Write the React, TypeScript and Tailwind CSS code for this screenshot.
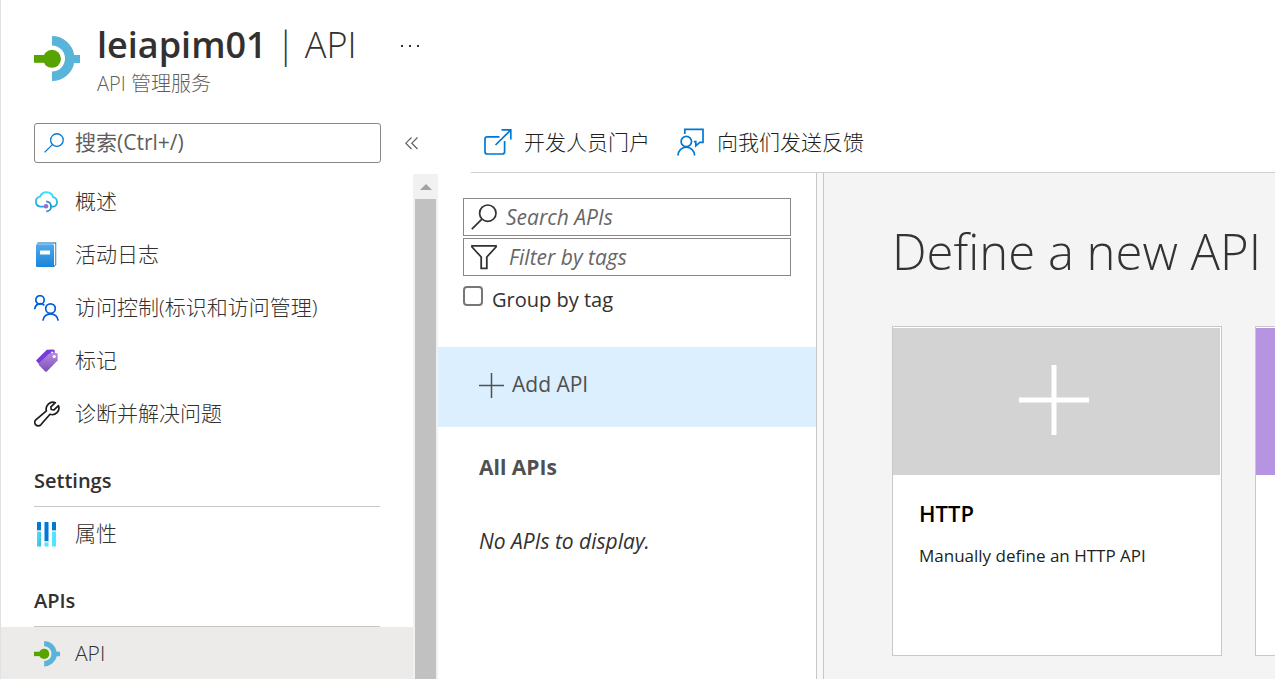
import { useState } from 'react'
import type { ReactNode } from 'react'

interface NavItem {
  label: string
  icon: ReactNode
  active?: boolean
}

interface NavSection {
  title?: string
  items: NavItem[]
}

function ApiIcon({ className }: { className: string }) {
  return (
    <svg className={className} viewBox="0 0 46 46" aria-hidden="true">
      <path
        d="M18 0a22.5 22.5 0 0 1 22.2 19H46v8h-5.8A22.5 22.5 0 0 1 18 45v-9.500a13 13 0 0 0 0-26z"
        fill="#59b4d9"
      />
      <circle cx="18" cy="22.800" r="9" fill="#57a300" />
      <path d="M0 19h14v7.800H0z" fill="#57a300" />
    </svg>
  )
}

function SearchIcon({ className }: { className: string }) {
  return (
    <svg className={className} viewBox="0 0 26 26" fill="none" stroke="currentColor" aria-hidden="true">
      <circle cx="16.800" cy="9.200" r="8.200" strokeWidth={1.7} />
      <path d="M10.900 15.100L0.800 25.200" strokeWidth={1.7} />
    </svg>
  )
}

function CloudIcon() {
  return (
    <svg className="h-[26px] w-[26px]" viewBox="0 0 26 26" fill="none" aria-hidden="true">
      <defs>
        <linearGradient id="cloud" x1="0" y1="0" x2="0" y2="1">
          <stop offset="0" stopColor="#3fe0fa" />
          <stop offset="1" stopColor="#1fa5dc" />
        </linearGradient>
      </defs>
      <path
        d="M9.500 17.600H6.500a5 5 0 0 1-.5-9.900A7 7 0 0 1 19.200 8.200a4.900 4.900 0 0 1 .2 9.500h-1"
        stroke="url(#cloud)"
        strokeWidth={1.8}
        strokeLinecap="round"
      />
      <path d="M12.200 12.500a4.900 4.900 0 0 1 0 9.800" stroke="#2593c8" strokeWidth={1.8} />
      <circle cx="12" cy="17.300" r="2.300" fill="#9a6ad6" />
    </svg>
  )
}

function BookIcon() {
  return (
    <svg className="h-[26px] w-[26px]" viewBox="0 0 26 26" aria-hidden="true">
      <defs>
        <linearGradient id="book" x1="0" y1="0" x2="0" y2="1">
          <stop offset="0" stopColor="#53a9ee" />
          <stop offset="1" stopColor="#1985d8" />
        </linearGradient>
      </defs>
      <path d="M3.500 .6h18.700v22L20 25H3.500z" fill="#0c6299" />
      <path d="M4 1.600h17.400v21L19.800 24V3.600H3z" fill="#fff" />
      <rect x="2" y="2.200" width="17.800" height="22.800" rx="1" fill="url(#book)" />
      <rect x="6" y="8.500" width="10" height="4" rx="0.500" fill="#fff" />
    </svg>
  )
}

function PeopleIcon() {
  return (
    <svg
      className="h-[26px] w-[26px]"
      viewBox="0 0 26 26"
      fill="none"
      stroke="#015cda"
      strokeWidth={1.7}
      aria-hidden="true"
    >
      <circle cx="6" cy="4.900" r="4.200" />
      <path d="M.8 14.300a5.600 5.600 0 0 1 9.500-4" />
      <circle cx="16.500" cy="13.600" r="4.800" />
      <path d="M8.900 25.600a7.700 7.700 0 0 1 15.300 0" />
    </svg>
  )
}

function TagIcon() {
  return (
    <svg className="h-[26px] w-[26px]" viewBox="0 0 26 26" aria-hidden="true">
      <defs>
        <linearGradient id="tag" x1="0" y1="0" x2="0" y2="1">
          <stop offset="0" stopColor="#b78ae0" />
          <stop offset="1" stopColor="#7a4fb8" />
        </linearGradient>
      </defs>
      <path d="M2 12.500L12.800 1.800l6.700-.4 1.200 1v6L8.400 16.800l-3-.2z" fill="#773adc" />
      <circle cx="18.200" cy="4.600" r="1.200" fill="#fff" />
      <path d="M4.800 15.200L15.600 5.200l7-.2 1 1v6.600L12.600 23.800l-1.200 0L4.800 17z" fill="url(#tag)" />
      <circle cx="20.200" cy="8.600" r="1.600" fill="#fff" />
    </svg>
  )
}

function WrenchIcon() {
  return (
    <svg
      className="h-[26px] w-[26px]"
      viewBox="0 0 26 26"
      fill="none"
      stroke="#1b1a19"
      strokeWidth={1.7}
      strokeLinejoin="round"
      aria-hidden="true"
    >
      <path d="M21.300 1.700a6.800 6.800 0 0 0-8.900 8.200L1.800 18.800a3.500 3.500 0 1 0 5 5L16 13.300a6.700 6.700 0 0 0 8.500-8.600L20 8.900l-2.800-.4-.3-2.700z" />
    </svg>
  )
}

function PropertiesIcon() {
  return (
    <svg className="h-[26px] w-[26px]" viewBox="0 0 26 26" aria-hidden="true">
      <defs>
        <linearGradient id="bar" x1="0" y1="0" x2="1" y2="1">
          <stop offset="0" stopColor="#50e6ff" />
          <stop offset="1" stopColor="#32b7d8" />
        </linearGradient>
      </defs>
      <rect x="3" y="1" width="4" height="8.500" rx="0.600" fill="#0078d4" />
      <rect x="3" y="10.500" width="4" height="15" rx="0.600" fill="url(#bar)" />
      <rect x="10.500" y="1" width="4" height="19" rx="0.600" fill="#0078d4" />
      <rect x="10.500" y="21.500" width="4" height="4" rx="0.600" fill="#50e6ff" />
      <rect x="18" y="1" width="4" height="8.500" rx="0.600" fill="#0078d4" />
      <rect x="18" y="10.500" width="4" height="15" rx="0.600" fill="#50e6ff" />
      <path d="M2.500 9.500h5M10 20.800h5M17.500 9.500h5" stroke="#c8ccd0" strokeWidth={0.9} />
    </svg>
  )
}

function ExternalIcon() {
  return (
    <svg
      className="h-[28px] w-[28px]"
      viewBox="0 0 28 28"
      fill="none"
      stroke="#0078d4"
      strokeWidth={1.7}
      aria-hidden="true"
    >
      <path d="M15.500 8.800H3.300a2.300 2.300 0 0 0-2.300 2.300v12.600A2.300 2.300 0 0 0 3.300 26h15a2.300 2.300 0 0 0 2.300-2.300V13" />
      <path d="M11.500 17L26.800 1.900M17.500 1.900h9.300v9.600" />
    </svg>
  )
}

function FeedbackIcon() {
  return (
    <svg
      className="h-[28px] w-[28px]"
      viewBox="0 0 28 28"
      fill="none"
      stroke="#0078d4"
      strokeWidth={1.7}
      aria-hidden="true"
    >
      <circle cx="9.300" cy="13.500" r="5.200" />
      <path d="M1 27.500a8.300 8.300 0 0 1 16.600 0" />
      <path d="M7.800 6V1.300h18.200v13h-3.200l-4 3.500v-4.200h-2" />
    </svg>
  )
}

function FunnelIcon() {
  return (
    <svg
      className="h-[26px] w-[26px] shrink-0"
      viewBox="0 0 26 26"
      fill="none"
      stroke="#323130"
      strokeWidth={1.8}
      aria-hidden="true"
    >
      <path d="M1 1.800h24v1.200L15.800 13v11.300h-5.600V13L1 3z" />
    </svg>
  )
}

const sections: NavSection[] = [
  {
    items: [
      { label: '概述', icon: <CloudIcon /> },
      { label: '活动日志', icon: <BookIcon /> },
      { label: '访问控制(标识和访问管理)', icon: <PeopleIcon /> },
      { label: '标记', icon: <TagIcon /> },
      { label: '诊断并解决问题', icon: <WrenchIcon /> },
    ],
  },
  { title: 'Settings', items: [{ label: '属性', icon: <PropertiesIcon /> }] },
  {
    title: 'APIs',
    items: [{ label: 'API', icon: <ApiIcon className="h-[26px] w-[26px]" />, active: true }],
  },
]

function Header() {
  return (
    <header className="flex h-[123px] shrink-0 items-start pl-[33px]">
      <ApiIcon className="mt-9 h-[46px] w-[46px] shrink-0" />
      <div className="ml-[17px] pt-5">
        <h1 className="text-[36px] leading-[50px] whitespace-nowrap text-[#323130]">
          <span className="font-semibold">leiapim01</span>
          <span className="font-light"> | API</span>
        </h1>
        <p className="text-[20px] leading-7 font-light text-[#605e5c]">API 管理服务</p>
      </div>
      <button type="button" aria-label="More" className="mt-9 ml-11 flex h-5 items-center gap-[6px]">
        <span className="size-[2px] bg-[#323130]" />
        <span className="size-[2px] bg-[#323130]" />
        <span className="size-[2px] bg-[#323130]" />
      </button>
    </header>
  )
}

function NavLink({ item }: { item: NavItem }) {
  return (
    <a
      href="#"
      className={`flex h-[53px] items-center gap-[15px] pl-[33px] text-[21px] font-light text-[#323130] ${
        item.active ? 'bg-[#edebe9]' : ''
      }`}
    >
      {item.icon}
      {item.label}
    </a>
  )
}

function Sidebar() {
  return (
    <aside className="flex w-[437px] shrink-0 flex-col">
      <div className="flex items-center pl-[33px]">
        <label className="flex h-10 w-[347px] items-center gap-[11px] rounded-[3px] border border-[#8a8886] pl-[9px]">
          <SearchIcon className="size-5 shrink-0 text-[#0078d4]" />
          <input
            type="text"
            aria-label="搜索"
            placeholder="搜索(Ctrl+/)"
            className="w-full text-[21px] outline-none placeholder:text-[#605e5c]"
          />
        </label>
        <button type="button" aria-label="Collapse" className="ml-6 text-[#605e5c]">
          <svg className="h-[14px] w-[14px]" viewBox="0 0 14 14" fill="none" stroke="currentColor">
            <path d="M6.500 1.500L.8 7.200 6.500 13M12.500 1.500L6.800 7.200 12.500 13" strokeWidth={1.2} />
          </svg>
        </button>
      </div>
      <div className="mt-[11px] flex min-h-0 flex-1">
        <nav className="min-w-0 flex-1 overflow-hidden pt-px">
          {sections.map((section, i) => (
            <div key={i}>
              {section.title && (
                <h2 className="mx-[33px] flex h-[67px] items-end border-b border-[#c8c6c4] pb-[13px] text-[20px] leading-6 font-semibold text-[#323130]">
                  {section.title}
                </h2>
              )}
              {section.items.map((item) => (
                <NavLink key={item.label} item={item} />
              ))}
            </div>
          ))}
        </nav>
        <div className="flex w-[25px] shrink-0 flex-col bg-[#f1f1f1] px-[2px]">
          <div className="flex h-[25px] shrink-0 items-center justify-center">
            <svg className="h-[6px] w-[12px]" viewBox="0 0 12 6" aria-hidden="true">
              <path d="M0 6L6 0l6 6z" fill="#a3a3a3" />
            </svg>
          </div>
          <div className="flex-1 bg-[#c1c1c1]" />
        </div>
      </div>
    </aside>
  )
}

function Toolbar() {
  return (
    <div className="ml-[33px] flex h-[50px] shrink-0 items-start gap-[27px] border-b border-[#d2d0ce] pl-[13px] text-[21px] leading-[38px] font-light text-[#201f1e]">
      <a href="#" className="flex items-center gap-3">
        <ExternalIcon />
        开发人员门户
      </a>
      <a href="#" className="flex items-center gap-3">
        <FeedbackIcon />
        向我们发送反馈
      </a>
    </div>
  )
}

function ApiList() {
  const [grouped, setGrouped] = useState(false)

  return (
    <section className="w-[379px] shrink-0 border-r border-[#c8c8c8] pt-[25px] text-[21px]">
      <div className="flex flex-col gap-[2px] px-[25px]">
        <label className="flex h-[38px] items-center gap-[9px] border border-[#8a8886] pl-[7px]">
          <SearchIcon className="size-[26px] shrink-0 text-[#323130]" />
          <input
            type="text"
            aria-label="Search APIs"
            placeholder="Search APIs"
            className="w-full pt-[2px] italic outline-none placeholder:text-[#666]"
          />
        </label>
        <label className="flex h-[38px] items-center gap-3 border border-[#8a8886] pl-[7px]">
          <FunnelIcon />
          <input
            type="text"
            aria-label="Filter by tags"
            placeholder="Filter by tags"
            className="w-full pt-[2px] italic outline-none placeholder:text-[#666]"
          />
        </label>
        <label className="mt-2 flex h-7 gap-[9px] text-[20px] leading-7 text-[#323130]">
          <input
            type="checkbox"
            checked={grouped}
            onChange={(e) => setGrouped(e.target.checked)}
            className="size-5 appearance-none rounded-[4px] border-2 border-[#767676] bg-white checked:bg-[#0078d4]"
          />
          Group by tag
        </label>
      </div>
      <button
        type="button"
        className="mt-[33px] flex h-20 w-full items-center gap-2 bg-[#dceffe] pb-1 pl-[41px] text-[#505050]"
      >
        <svg className="h-[25px] w-[25px]" viewBox="0 0 25 25" stroke="currentColor" aria-hidden="true">
          <path d="M12.500 0v25M0 12.500h25" strokeWidth={1.5} />
        </svg>
        Add API
      </button>
      <a href="#" className="block pt-[26px] pl-[41px] leading-7 font-bold text-[#505050]">
        All APIs
      </a>
      <p className="pt-[46px] pl-[41px] leading-7 text-[#323130] italic">No APIs to display.</p>
    </section>
  )
}

function NewApiPane() {
  return (
    <section className="min-w-0 flex-1 overflow-hidden border-l border-[#c8c8c8] bg-[#f4f4f4] pt-[46px] pl-[68px]">
      <h2 className="text-[49px] leading-[64px] font-light whitespace-nowrap text-[#333]">
        Define a new API
      </h2>
      <div className="mt-[43px] flex gap-[33px]">
        <a href="#" className="h-[330px] w-[330px] shrink-0 border border-[#c8c8c8] bg-white pt-px pr-px">
          <div className="flex h-[147px] items-center justify-center bg-[#d3d3d3] pr-[6px] pb-1">
            <svg className="h-[70px] w-[70px]" viewBox="0 0 70 70" stroke="#fff" aria-hidden="true">
              <path d="M35 0v70M0 35h70" strokeWidth={5} />
            </svg>
          </div>
          <div className="pt-[23px] pl-[26px]">
            <h3 className="text-[22px] leading-[30px] font-semibold text-black">HTTP</h3>
            <p className="mt-4 text-[17px] leading-6 text-[#201f1e]">Manually define an HTTP API</p>
          </div>
        </a>
        <div className="h-[330px] w-[330px] shrink-0 border border-[#c8c8c8] bg-white pt-px pr-px">
          <div className="h-[147px] bg-[#b794e1]" />
        </div>
      </div>
    </section>
  )
}

export default function App() {
  return (
    <div className="flex h-screen flex-col overflow-hidden border-l border-[#e1e1e1] bg-white font-['Open_Sans','Noto_Sans_CJK_SC',sans-serif]">
      <Header />
      <div className="flex min-h-0 flex-1">
        <Sidebar />
        <main className="flex min-w-0 flex-1 flex-col">
          <Toolbar />
          <div className="flex min-h-0 flex-1">
            <ApiList />
            <div className="w-[6px] shrink-0 bg-[#f8f8f8]" />
            <NewApiPane />
          </div>
        </main>
      </div>
    </div>
  )
}
